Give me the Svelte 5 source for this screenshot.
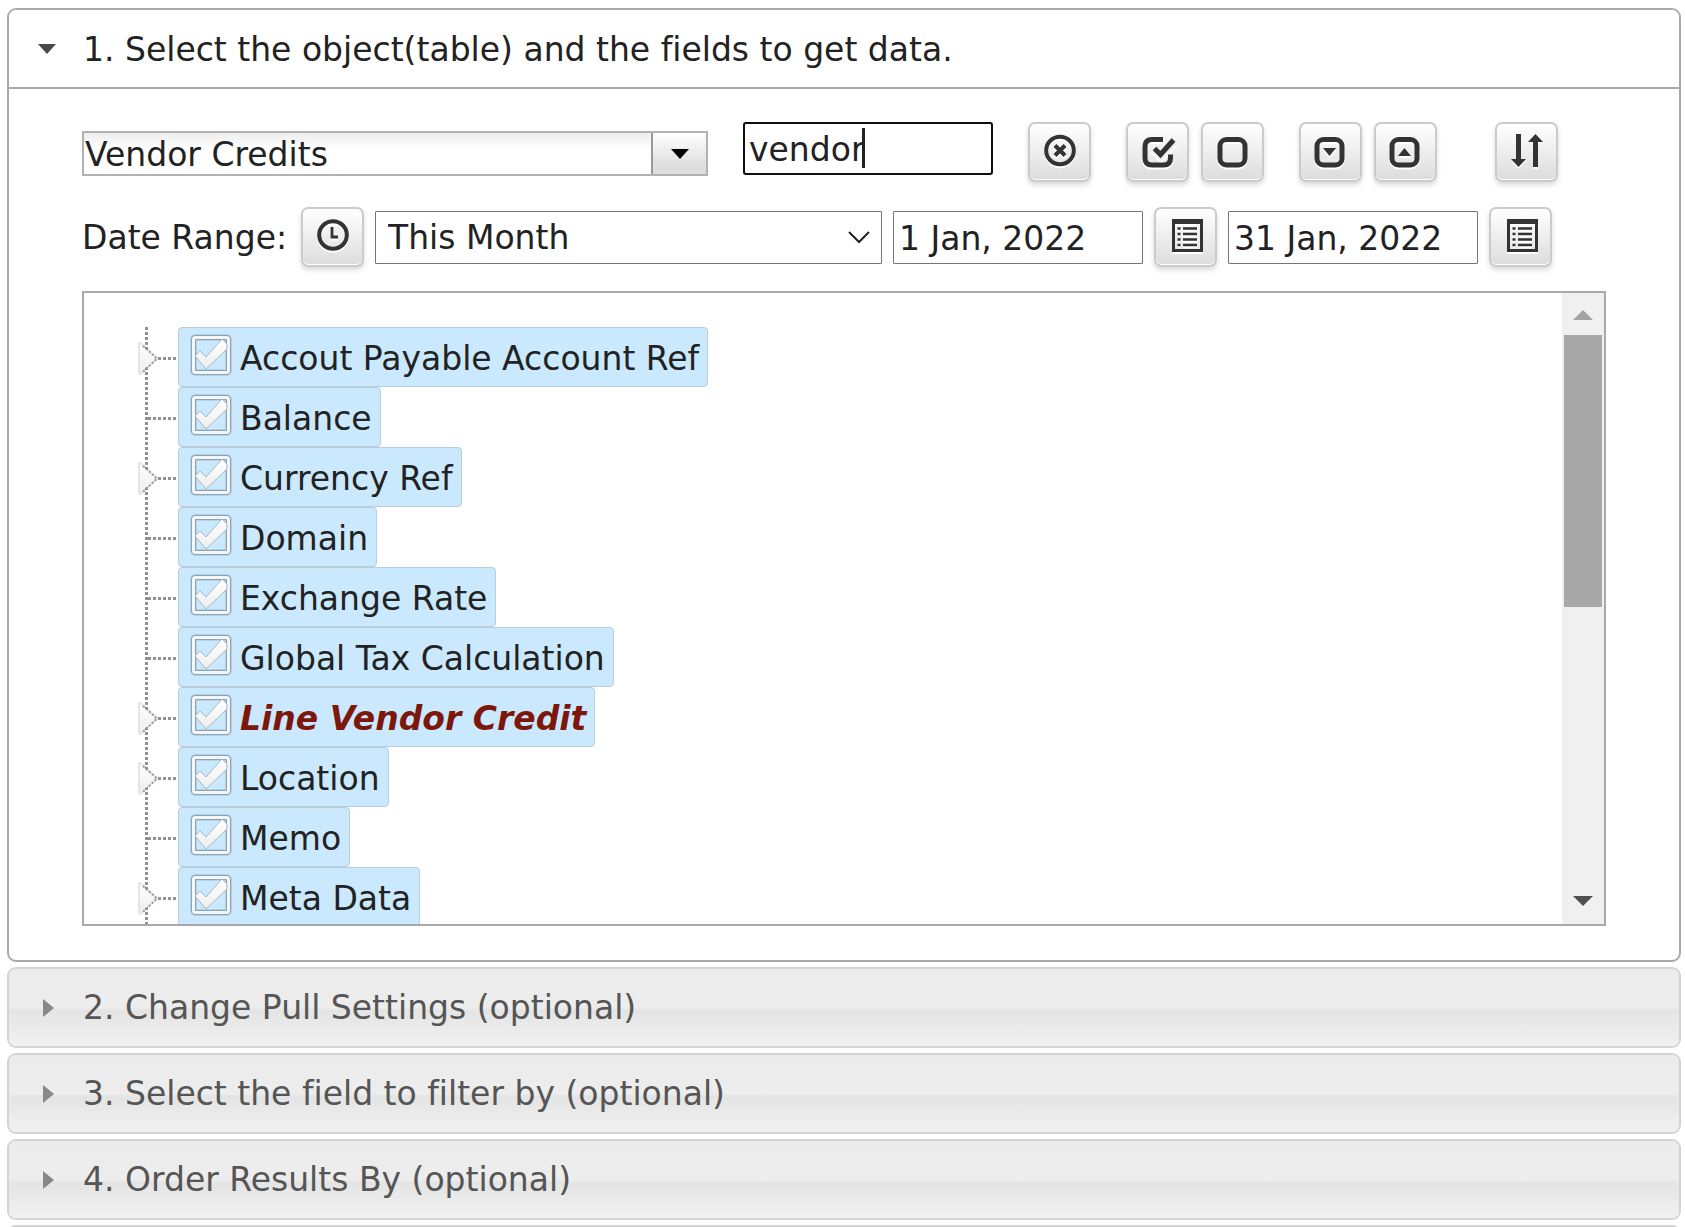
<script>
  const fields = [
    { name: 'Accout Payable Account Ref', parent: true },
    { name: 'Balance' },
    { name: 'Currency Ref', parent: true },
    { name: 'Domain' },
    { name: 'Exchange Rate' },
    { name: 'Global Tax Calculation' },
    { name: 'Line Vendor Credit', parent: true, match: true },
    { name: 'Location', parent: true },
    { name: 'Memo' },
    { name: 'Meta Data', parent: true }
  ];
  const steps = [
    '2. Change Pull Settings (optional)',
    '3. Select the field to filter by (optional)',
    '4. Order Results By (optional)'
  ];
</script>

{#snippet listIcon()}
  <svg class="icon" viewBox="0 0 36 36" aria-hidden="true">
    <path fill="#333" fill-rule="evenodd" d="M4 0h31v33H4zM7 5v25h25V5z" />
    <path stroke="#333" stroke-width="2.4" d="M9.500 9.500h3M15 9.500h14M9.500 15h3M15 15h14M9.500 20.500h3M15 20.500h14M9.500 26h3M15 26h14" />
  </svg>
{/snippet}

<main class="page">
  <section class="panel">
    <h2>
      <button class="head open" aria-expanded="true">
        <svg class="arrow" viewBox="0 0 20 20" aria-hidden="true"><path fill="#484848" d="M1 4h18l-9 10z" /></svg>
        <span>1. Select the object(table) and the fields to get data.</span>
      </button>
    </h2>

    <div class="body">
      <div class="row tools">
        <div class="combo">
          <input type="text" aria-label="Object" value="Vendor Credits" />
          <button aria-label="Show objects">
            <svg viewBox="0 0 20 20" aria-hidden="true"><path d="M1 5h18l-9 10z" /></svg>
          </button>
        </div>
        <div class="search">
          <input type="text" aria-label="Search fields" value="vendor" />
          <span class="caret"></span>
        </div>
        <button class="btn" aria-label="Clear search">
          <svg class="icon" viewBox="0 0 36 36" aria-hidden="true">
            <g fill="none" stroke="#333" stroke-width="4"><circle cx="18" cy="16.500" r="13.800" /><path d="M13 11.500l10 10M23 11.500l-10 10" /></g>
          </svg>
        </button>
        <div class="group">
          <button class="btn" aria-label="Check all">
            <svg class="icon" viewBox="0 0 36 36" aria-hidden="true">
              <path fill="none" stroke="#333" stroke-width="5" d="M23 5.500H12q-7 0-7 7V24q0 7 7 7h11.500q7 0 7-7v-3.500" />
              <path fill="none" stroke="#eee" stroke-width="9" d="M14 14l7 7L35 6" />
              <path fill="none" stroke="#333" stroke-width="5" d="M14.500 14.500l6 6L33.500 6" />
            </svg>
          </button>
          <button class="btn" aria-label="Uncheck all">
            <svg class="icon" viewBox="0 0 36 36" aria-hidden="true"><rect x="5" y="5.500" width="25" height="25.500" rx="6.500" fill="none" stroke="#333" stroke-width="5" /></svg>
          </button>
        </div>
        <div class="group">
          <button class="btn" aria-label="Expand all">
            <svg class="icon" viewBox="0 0 36 36" aria-hidden="true"><rect x="4" y="5.500" width="25" height="25.500" rx="6.500" fill="none" stroke="#333" stroke-width="5" /><path fill="#333" d="M10 14h13l-6.500 8z" /></svg>
          </button>
          <button class="btn" aria-label="Collapse all">
            <svg class="icon" viewBox="0 0 36 36" aria-hidden="true"><rect x="4" y="5.500" width="25" height="25.500" rx="6.500" fill="none" stroke="#333" stroke-width="5" /><path fill="#333" d="M10 22h13l-6.500-8z" /></svg>
          </button>
        </div>
        <button class="btn sort" aria-label="Sort">
          <svg class="icon" viewBox="0 0 36 36" aria-hidden="true"><path fill="#333" d="M7 0h5v25h5l-7.500 8L2 25h5zM24 33h5V8h5l-7.500-8L19 8h5z" /></svg>
        </button>
      </div>

      <div class="row dates">
        <label for="range">Date Range:</label>
        <button class="btn" aria-label="Time range">
          <svg class="icon" viewBox="0 0 36 36" aria-hidden="true"><circle cx="18" cy="16" r="13.800" fill="none" stroke="#333" stroke-width="4" /><path fill="none" stroke="#333" stroke-width="2.800" d="M17 8v10h6" /></svg>
        </button>
        <div class="range">
          <select id="range"><option>This Month</option></select>
          <svg viewBox="0 0 22 22" aria-hidden="true"><path fill="none" stroke="#222" stroke-width="2" d="M1 6l10 10L21 6" /></svg>
        </div>
        <input class="date" type="text" aria-label="From" value="1 Jan, 2022" />
        <button class="btn" aria-label="Pick start date">{@render listIcon()}</button>
        <input class="date" type="text" aria-label="To" value="31 Jan, 2022" />
        <button class="btn" aria-label="Pick end date">{@render listIcon()}</button>
      </div>

      <div class="tree">
        <ul>
          {#each fields as f}
            <li>
              <svg class="branch" viewBox="0 0 48 60" aria-hidden="true">
                <defs>
                  <linearGradient id="tri" x2="0" y2="1"><stop offset="0" stop-color="#fff" /><stop offset="1" stop-color="#ececec" /></linearGradient>
                </defs>
                <path fill="none" stroke="#929292" stroke-width="3" stroke-dasharray="3 2" d="M16.500 0v60" />
                <path fill="none" stroke="#929292" stroke-width="3" stroke-dasharray="3 2" d="M18 31.500h30" />
                {#if f.parent}
                  <path fill="none" stroke="#000" stroke-opacity=".1" stroke-width="4" stroke-linejoin="round" d="M10 17v29l16-14.500z" />
                  <path fill="url(#tri)" d="M10 17v29l16-14.500z" />
                  <path fill="none" stroke="#999" stroke-width="2" stroke-dasharray="2 2" d="M13 19l14 12.500L13 45" />
                {/if}
              </svg>
              <label class="node">
                <span class="tick">
                  <input type="checkbox" checked />
                  <svg viewBox="0 0 42 42" aria-hidden="true">
                    <defs>
                      <linearGradient id="tk" x2="0" y2="1"><stop offset="0" stop-color="#fff" /><stop offset="1" stop-color="#eee" /></linearGradient>
                    </defs>
                    <rect x="3.500" y="3.500" width="35" height="35" rx="2" fill="none" stroke="#6f8797" stroke-opacity=".25" stroke-width="7" />
                    <rect x="3.500" y="3.500" width="35" height="35" rx="2" fill="none" stroke="#8299a8" stroke-opacity=".8" stroke-width="5" />
                    <rect x="3.500" y="3.500" width="35" height="35" rx="2" fill="none" stroke="#f5f6f7" stroke-width="3" />
                    <path fill="url(#tk)" stroke="#a3b7c5" stroke-width="1" d="M5 22l5-5 6 6L32 5l5 5v5L16 35z" />
                  </svg>
                </span>
                <span class="name" class:match={f.match}>{f.name}</span>
              </label>
            </li>
          {/each}
        </ul>
        <div class="bar" aria-hidden="true">
          <svg viewBox="0 0 42 42"><path fill="#a3a3a3" d="M11 27l10-10 10 10z" /></svg>
          <div class="thumb"></div>
          <svg viewBox="0 0 42 42"><path fill="#505050" d="M11 14h20L21 24z" /></svg>
        </div>
      </div>
    </div>
  </section>

  {#each steps as s}
    <h2 class="closed">
      <button class="head" aria-expanded="false">
        <svg class="arrow" viewBox="0 0 20 20" aria-hidden="true"><path fill="#888" d="M6 1v18l11-9z" /></svg>
        <span>{s}</span>
      </button>
    </h2>
  {/each}
  <div class="closed"><div class="head"></div></div>
</main>

<style>
  :global(body) { background: #fff; }
  .page {
    box-sizing: border-box;
    height: 100vh;
    overflow: hidden;
    padding: 8px 4px 0 7px;
    font: 33px/40px "DejaVu Sans", sans-serif;
    font-variant-ligatures: none;
    color: #222;
  }
  .page :is(button, input, select, div, h2, label) { box-sizing: border-box; }
  button, input, select { font: inherit; font-variant-ligatures: inherit; color: inherit; margin: 0; }
  h2 { margin: 0; font: inherit; font-variant-ligatures: inherit; }
  .panel { border: 2px solid #aaa; border-radius: 9px; }
  .head {
    display: flex;
    align-items: center;
    gap: 26px;
    width: 100%;
    height: 77px;
    padding: 0 28px;
    border: 0;
    border-radius: 7px;
    text-align: left;
    color: #555;
    background: linear-gradient(#ebebeb, #ededed 50%, #e4e4e4 54%, #f1f1f1);
  }
  .head.open {
    height: 79px;
    padding-top: 2px;
    border-bottom: 2px solid #aaa;
    border-radius: 7px 7px 0 0;
    color: #222;
    background: #fff;
  }
  .arrow { flex: none; width: 20px; height: 20px; }
  .closed { margin-top: 5px; border: 2px solid #d3d3d3; border-radius: 9px; }

  .body { padding: 33px 73px 34px; }
  .row { display: flex; }
  .tools { align-items: flex-start; gap: 35px; padding-right: 48px; }
  .group { display: flex; gap: 12px; }
  .group:first-of-type { gap: 11px; }
  .sort { margin-left: 23px; }
  .combo {
    display: flex;
    flex: 1;
    height: 45px;
    margin-top: 9px;
    border: 2px solid #b2b2b2;
    background: linear-gradient(#eee, #fff 40%);
  }
  .combo input { flex: 1; min-width: 0; padding: 2px 0 0 1px; border: 0; background: none; outline: 0; }
  .combo button {
    width: 55px;
    padding: 0;
    border: 0;
    border-left: 2px solid #999;
    background: linear-gradient(#fff, #dedede 80%, #dedede);
  }
  .combo svg { display: block; width: 20px; height: 20px; margin: auto; }
  .search { position: relative; width: 250px; }
  .search input {
    display: block;
    width: 100%;
    height: 53px;
    padding: 2px 4px 0;
    border: 2px solid #101010;
    border-radius: 3px;
    outline: 0;
  }
  .caret { position: absolute; left: 119px; top: 6px; width: 3px; height: 40px; background: #222; }
  .btn {
    flex: none;
    display: grid;
    place-items: center;
    width: 63px;
    height: 60px;
    padding: 0;
    border: 2px solid #cbcbcb;
    border-radius: 7px;
    background: linear-gradient(#fff, #dcdcdc);
    box-shadow: 0 3px 5px rgba(0, 0, 0, .15), inset 0 -1px 0 #fff;
  }
  .icon { width: 36px; height: 36px; overflow: visible; filter: drop-shadow(0 2px 0 #fff); }

  .dates { align-items: center; gap: 11px; margin: 25px 0 24px; padding-right: 54px; }
  .dates label { flex: none; width: 208px; padding-top: 2px; white-space: nowrap; }
  .range { position: relative; flex: 1; }
  .range select {
    display: block;
    width: 100%;
    height: 53px;
    padding: 2px 12px 0;
    border: 1px solid #767676;
    border-radius: 1px;
    background: #fff;
    appearance: none;
  }
  .range svg { position: absolute; right: 12px; top: 15px; width: 22px; height: 22px; pointer-events: none; }
  .date { width: 250px; height: 53px; padding: 2px 5px 0; border: 1px solid #767676; border-radius: 1px; }

  .tree { display: flex; height: 635px; border: 2px solid #a9a9a9; }
  ul { flex: 1; margin: 0; padding: 34px 0 0 46px; overflow: hidden; list-style: none; }
  li { display: flex; height: 60px; }
  .branch { flex: none; width: 48px; height: 60px; }
  .node {
    display: flex;
    align-items: center;
    gap: 8px;
    padding: 0 8px 0 11px;
    border: 1px solid #b9cdda;
    border-radius: 4px;
    background: #cbe9fe;
    white-space: nowrap;
  }
  .tick { display: grid; width: 42px; height: 42px; margin-bottom: 4px; }
  .tick > * { grid-area: 1 / 1; width: 42px; height: 42px; margin: 0; }
  .tick input { appearance: none; }
  .tick svg { pointer-events: none; }
  .name { padding-top: 4px; }
  .match { font-weight: bold; font-style: italic; color: #7d170c; }
  .bar { display: flex; flex-direction: column; width: 42px; background: #f0f0f0; }
  .bar svg { width: 42px; height: 42px; }
  .thumb { height: 272px; margin: 0 2px auto; background: #a8a8a8; }
</style>
